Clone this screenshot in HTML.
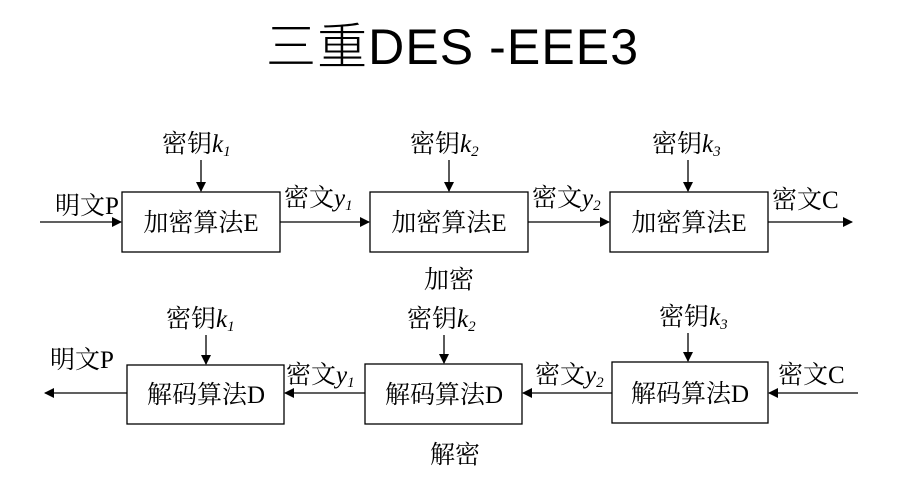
<!DOCTYPE html>
<html><head><meta charset="utf-8"><style>
html,body{margin:0;padding:0;background:#fff;width:905px;height:495px;overflow:hidden}
svg{display:block}
.t{font-family:"Liberation Serif","Noto Serif CJK SC",serif;font-size:25px;fill:#000}
.i{font-style:italic}
</style></head><body>
<svg width="905" height="495" viewBox="0 0 905 495">
<defs><marker id="a" markerWidth="10" markerHeight="10" refX="9" refY="5" orient="auto" markerUnits="userSpaceOnUse"><path d="M0,0 L10,5 L0,10 z" fill="#000"/></marker></defs>
<text x="452" y="64" text-anchor="middle" style="font-family:'Liberation Sans','Noto Sans CJK SC',sans-serif;font-size:50px;font-weight:300" textLength="372">三重DES -EEE3</text>
<g stroke="#000" stroke-width="1.3" fill="none">
<rect x="122" y="192" width="158" height="60"/>
<rect x="370" y="192" width="158" height="60"/>
<rect x="610" y="192" width="158" height="60"/>
<rect x="127" y="365" width="157" height="59"/>
<rect x="365" y="364" width="157" height="60"/>
<rect x="612" y="362" width="156" height="61"/>
<line x1="40" y1="222" x2="121" y2="222" marker-end="url(#a)"/>
<line x1="280" y1="222" x2="369" y2="222" marker-end="url(#a)"/>
<line x1="528" y1="222" x2="609" y2="222" marker-end="url(#a)"/>
<line x1="768" y1="222" x2="852" y2="222" marker-end="url(#a)"/>
<line x1="201" y1="160" x2="201" y2="191" marker-end="url(#a)"/>
<line x1="449" y1="160" x2="449" y2="191" marker-end="url(#a)"/>
<line x1="688" y1="160" x2="688" y2="191" marker-end="url(#a)"/>
<line x1="127" y1="393" x2="45" y2="393" marker-end="url(#a)"/>
<line x1="365" y1="393" x2="285" y2="393" marker-end="url(#a)"/>
<line x1="612" y1="393" x2="523" y2="393" marker-end="url(#a)"/>
<line x1="858" y1="393" x2="769" y2="393" marker-end="url(#a)"/>
<line x1="206" y1="335" x2="206" y2="364" marker-end="url(#a)"/>
<line x1="444" y1="335" x2="444" y2="363" marker-end="url(#a)"/>
<line x1="688" y1="333" x2="688" y2="361" marker-end="url(#a)"/>
</g>
<g class="t">
<text x="162" y="152">密钥<tspan class="i">k</tspan><tspan class="i" font-size="15" dy="4">1</tspan></text>
<text x="410" y="152">密钥<tspan class="i">k</tspan><tspan class="i" font-size="15" dy="4">2</tspan></text>
<text x="652" y="152">密钥<tspan class="i">k</tspan><tspan class="i" font-size="15" dy="4">3</tspan></text>
<text x="55" y="214">明文P</text>
<text x="284" y="206">密文<tspan class="i">y</tspan><tspan class="i" font-size="15" dy="4">1</tspan></text>
<text x="532" y="206">密文<tspan class="i">y</tspan><tspan class="i" font-size="15" dy="4">2</tspan></text>
<text x="772" y="208">密文C</text>
<text x="201" y="231" text-anchor="middle">加密算法E</text>
<text x="449" y="231" text-anchor="middle">加密算法E</text>
<text x="689" y="231" text-anchor="middle">加密算法E</text>
<text x="449" y="288" text-anchor="middle">加密</text>
<text x="166" y="327">密钥<tspan class="i">k</tspan><tspan class="i" font-size="15" dy="4">1</tspan></text>
<text x="407" y="327">密钥<tspan class="i">k</tspan><tspan class="i" font-size="15" dy="4">2</tspan></text>
<text x="659" y="325">密钥<tspan class="i">k</tspan><tspan class="i" font-size="15" dy="4">3</tspan></text>
<text x="50" y="368">明文P</text>
<text x="286" y="383">密文<tspan class="i">y</tspan><tspan class="i" font-size="15" dy="4">1</tspan></text>
<text x="535" y="383">密文<tspan class="i">y</tspan><tspan class="i" font-size="15" dy="4">2</tspan></text>
<text x="778" y="383">密文C</text>
<text x="206" y="403" text-anchor="middle">解码算法D</text>
<text x="444" y="403" text-anchor="middle">解码算法D</text>
<text x="690" y="402" text-anchor="middle">解码算法D</text>
<text x="455" y="463" text-anchor="middle">解密</text>
</g>
</svg>
</body></html>
